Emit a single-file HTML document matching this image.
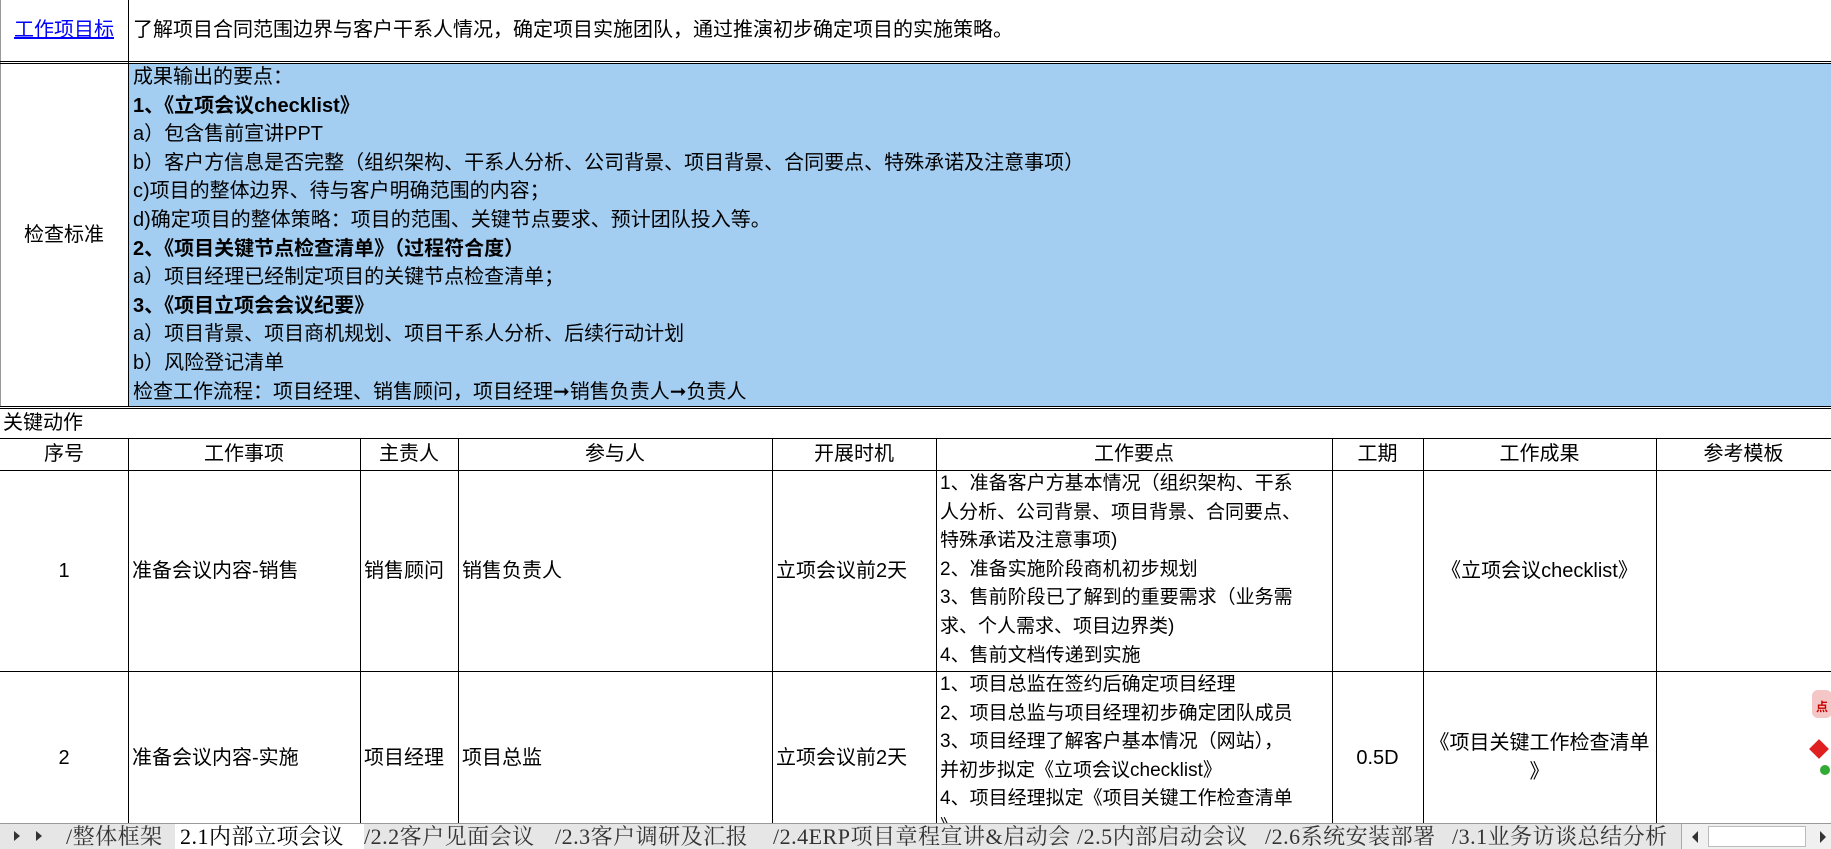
<!DOCTYPE html>
<html><head><meta charset="utf-8"><style>
*{margin:0;padding:0;box-sizing:border-box}
body{width:1831px;height:849px;overflow:hidden;background:#fff;font-family:"Liberation Sans","Noto Sans CJK SC",sans-serif;font-size:20px;color:#000;position:relative}
.a{position:absolute}
.h{position:absolute;background:#000;height:1px}
.v{position:absolute;background:#000;width:1px}
.c{position:absolute;display:flex;align-items:center;justify-content:center;text-align:center;line-height:28.6px}
.l{justify-content:flex-start;text-align:left;padding-left:4px}
.w{font-size:19px}
.tab{position:absolute;top:825px;height:24px;font-family:"Liberation Serif","Noto Serif CJK SC",serif;font-size:22px;line-height:24px;color:#333;white-space:nowrap;letter-spacing:0.5px}
</style></head><body>
<div class="v" style="left:0;top:0;height:406px;background:#999"></div>
<div class="v" style="left:128px;top:0;height:406px"></div>
<div class="c" style="left:0;top:0;width:128px;height:61px;color:#00f;text-decoration:underline">工作项目标</div>
<div class="c l" style="left:129px;top:0;width:1700px;height:61px">了解项目合同范围边界与客户干系人情况，确定项目实施团队，通过推演初步确定项目的实施策略。</div>
<div class="h" style="left:0;top:61px;width:1831px"></div>
<div class="h" style="left:0;top:63px;width:1831px"></div>
<div class="a" style="left:129px;top:64px;width:1702px;height:342px;background:#a3cdf1"></div>
<div class="c" style="left:0;top:64px;width:128px;height:342px">检查标准</div>
<div class="a" style="left:133px;top:63px;line-height:28.6px;white-space:nowrap">成果输出的要点：<br><b>1、《立项会议checklist》</b><br>a）包含售前宣讲PPT<br>b）客户方信息是否完整（组织架构、干系人分析、公司背景、项目背景、合同要点、特殊承诺及注意事项）<br>c)项目的整体边界、待与客户明确范围的内容；<br>d)确定项目的整体策略：项目的范围、关键节点要求、预计团队投入等。<br><b>2、《项目关键节点检查清单》（过程符合度）</b><br>a）项目经理已经制定项目的关键节点检查清单；<br><b>3、《项目立项会会议纪要》</b><br>a）项目背景、项目商机规划、项目干系人分析、后续行动计划<br>b）风险登记清单<br>检查工作流程：项目经理、销售顾问，项目经理➞销售负责人➞负责人</div>
<div class="h" style="left:0;top:406px;width:1831px"></div>
<div class="h" style="left:0;top:408px;width:1831px"></div>
<div class="a" style="left:3px;top:408px;line-height:30px">关键动作</div>
<div class="h" style="left:0;top:438px;width:1831px"></div>
<div class="h" style="left:0;top:470px;width:1831px"></div>
<div class="h" style="left:0;top:671px;width:1831px"></div>
<div class="v" style="left:128px;top:438px;height:390px"></div>
<div class="v" style="left:360px;top:438px;height:390px"></div>
<div class="v" style="left:458px;top:438px;height:390px"></div>
<div class="v" style="left:772px;top:438px;height:390px"></div>
<div class="v" style="left:936px;top:438px;height:390px"></div>
<div class="v" style="left:1332px;top:438px;height:390px"></div>
<div class="v" style="left:1423px;top:438px;height:390px"></div>
<div class="v" style="left:1656px;top:438px;height:390px"></div>
<div class="c" style="left:0;top:438px;width:128px;height:32px">序号</div>
<div class="c" style="left:128px;top:438px;width:232px;height:32px">工作事项</div>
<div class="c" style="left:360px;top:438px;width:98px;height:32px">主责人</div>
<div class="c" style="left:458px;top:438px;width:314px;height:32px">参与人</div>
<div class="c" style="left:772px;top:438px;width:164px;height:32px">开展时机</div>
<div class="c" style="left:936px;top:438px;width:396px;height:32px">工作要点</div>
<div class="c" style="left:1332px;top:438px;width:91px;height:32px">工期</div>
<div class="c" style="left:1423px;top:438px;width:233px;height:32px">工作成果</div>
<div class="c" style="left:1656px;top:438px;width:175px;height:32px">参考模板</div>
<div class="c" style="left:0;top:471px;width:128px;height:200px">1</div>
<div class="c l" style="left:128px;top:471px;width:232px;height:200px">准备会议内容-销售</div>
<div class="c l" style="left:360px;top:471px;width:98px;height:200px">销售顾问</div>
<div class="c l" style="left:458px;top:471px;width:314px;height:200px">销售负责人</div>
<div class="c l" style="left:772px;top:471px;width:164px;height:200px">立项会议前2天</div>
<div class="a w" style="left:940px;top:470px;line-height:28.6px;white-space:nowrap">1、准备客户方基本情况（组织架构、干系<br>人分析、公司背景、项目背景、合同要点、<br>特殊承诺及注意事项)<br>2、准备实施阶段商机初步规划<br>3、售前阶段已了解到的重要需求（业务需<br>求、个人需求、项目边界类)<br>4、售前文档传递到实施</div>
<div class="c" style="left:1423px;top:471px;width:233px;height:200px">《立项会议checklist》</div>
<div class="c" style="left:0;top:672px;width:128px;height:172px">2</div>
<div class="c l" style="left:128px;top:672px;width:232px;height:172px">准备会议内容-实施</div>
<div class="c l" style="left:360px;top:672px;width:98px;height:172px">项目经理</div>
<div class="c l" style="left:458px;top:672px;width:314px;height:172px">项目总监</div>
<div class="c l" style="left:772px;top:672px;width:164px;height:172px">立项会议前2天</div>
<div class="a w" style="left:940px;top:671px;line-height:28.6px;white-space:nowrap">1、项目总监在签约后确定项目经理<br>2、项目总监与项目经理初步确定团队成员<br>3、项目经理了解客户基本情况（网站），<br>并初步拟定《立项会议checklist》<br>4、项目经理拟定《项目关键工作检查清单<br>》</div>
<div class="c" style="left:1332px;top:672px;width:91px;height:172px">0.5D</div>
<div class="c" style="left:1423px;top:672px;width:233px;height:172px">《项目关键工作检查清单<br>》</div>
<div class="a" style="left:1812px;top:690px;width:20px;height:28px;background:#f4c6c6;border-radius:6px"></div>
<div class="a" style="left:1816px;top:698px;font-size:12px;color:#c00;font-weight:bold">点</div>
<div class="a" style="left:1812px;top:742px;width:14px;height:14px;background:#e02020;transform:rotate(45deg)"></div>
<div class="a" style="left:1820px;top:765px;width:10px;height:10px;background:#3a3;border-radius:50%"></div>
<div class="a" style="left:0;top:823px;width:1831px;height:26px;background:#e6e6e6;border-top:1px solid #9a9a9a"></div>
<div class="a" style="left:14px;top:831px;width:0;height:0;border-left:6px solid #333;border-top:5px solid transparent;border-bottom:5px solid transparent"></div>
<div class="a" style="left:36px;top:831px;width:0;height:0;border-left:6px solid #333;border-top:5px solid transparent;border-bottom:5px solid transparent"></div>
<div class="a" style="left:175px;top:824px;width:189px;height:25px;background:#fff"></div>
<div class="tab" style="left:66px">/整体框架</div>
<div class="tab" style="left:180px;color:#000">2.1内部立项会议</div>
<div class="tab" style="left:364px">/2.2客户见面会议</div>
<div class="tab" style="left:555px">/2.3客户调研及汇报</div>
<div class="tab" style="left:773px">/2.4ERP项目章程宣讲&amp;启动会</div>
<div class="tab" style="left:1077px">/2.5内部启动会议</div>
<div class="tab" style="left:1265px">/2.6系统安装部署</div>
<div class="tab" style="left:1452px;width:228px;overflow:hidden">/3.1业务访谈总结分析</div>
<div class="a" style="left:1681px;top:824px;width:150px;height:25px;background:#f0f0f0;border-left:1px solid #aaa"></div>
<div class="a" style="left:1692px;top:831px;width:0;height:0;border-right:6px solid #333;border-top:6px solid transparent;border-bottom:6px solid transparent"></div>
<div class="a" style="left:1708px;top:826px;width:98px;height:21px;background:#fff;border:1px solid #bbb"></div>
<div class="a" style="left:1820px;top:831px;width:0;height:0;border-left:6px solid #333;border-top:6px solid transparent;border-bottom:6px solid transparent"></div>
</body></html>
